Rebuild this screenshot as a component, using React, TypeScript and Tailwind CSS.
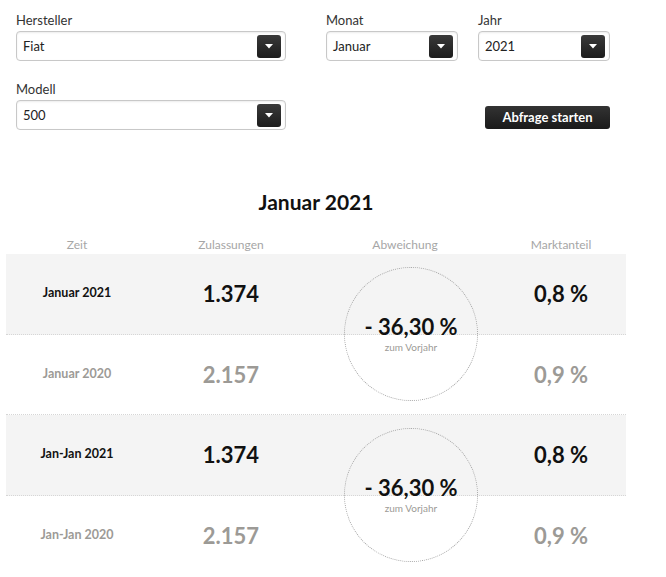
import React from "react";

const font = { fontFamily: "Lato, 'Noto Sans', sans-serif" };

const Select = ({ value, className }: { value: string; className: string }) => {
  return (
    <div
      className={`flex h-[30px] items-center justify-between rounded-[4px] border border-[#c8c8c8] bg-white pl-[6px] pr-[4px] shadow-[inset_0_1px_2px_rgba(0,0,0,0.08)] ${className}`}
    >
      <span className="pt-[1px] text-[13px] text-[#222]">{value}</span>
      <span className="flex h-[23px] w-[24px] items-center justify-center rounded-[3px] bg-gradient-to-b from-[#3a3a3a] to-[#1c1c1c]">
        <svg width="8" height="5" viewBox="0 0 8 5">
          <path d="M0 0 L8 0 L4 4.5 Z" fill="#fff" />
        </svg>
      </span>
    </div>
  );
};

const Field = ({
  label,
  value,
  className,
}: {
  label: string;
  value: string;
  className: string;
}) => (
  <div className="flex flex-col">
    <label className="mb-[3px] text-[13px] leading-[16px] text-[#333]">{label}</label>
    <Select value={value} className={className} />
  </div>
);

interface IRow {
  zeit: string;
  zulassungen: string;
  markt: string;
  current: boolean;
}

const Row = ({ row, last }: { row: IRow; last: boolean }) => (
  <div
    className={`grid h-[80.5px] grid-cols-[142px_166px_182px_130px] items-center ${
      last ? "" : "border-b border-dotted border-[#d6d6d6]"
    } ${row.current ? "bg-[#f4f4f4] text-[#111]" : "bg-white text-[#9c9a96]"}`}
  >
    <p className="text-center text-[12.5px] font-bold">{row.zeit}</p>
    <p className="text-center text-[22px] font-bold">{row.zulassungen}</p>
    <div />
    <p className="text-center text-[22px] font-bold">{row.markt}</p>
  </div>
);

const Pair = ({ rows, diff, last }: { rows: IRow[]; diff: string; last: boolean }) => (
  <div className="relative">
    {rows.map((r, i) => (
      <Row key={r.zeit} row={r} last={last && i === rows.length - 1} />
    ))}
    <div className="absolute left-[338px] top-[13px] flex h-[134px] w-[134px] flex-col items-center justify-center rounded-full border border-dotted border-[#a8a8a8]">
      <p className="text-[22px] font-bold leading-[26px] text-[#111]">{diff}</p>
      <p className="text-[10px] leading-[14px] text-[#9c9a96]">zum Vorjahr</p>
    </div>
  </div>
);

export default function App() {
  const monat: IRow[] = [
    { zeit: "Januar 2021", zulassungen: "1.374", markt: "0,8 %", current: true },
    { zeit: "Januar 2020", zulassungen: "2.157", markt: "0,9 %", current: false },
  ];
  const jahr: IRow[] = [
    { zeit: "Jan-Jan 2021", zulassungen: "1.374", markt: "0,8 %", current: true },
    { zeit: "Jan-Jan 2020", zulassungen: "2.157", markt: "0,9 %", current: false },
  ];

  return (
    <div className="min-h-[577px] w-[666px] bg-white" style={font}>
      <div className="pl-[16px] pt-[12px]">
        <div className="flex">
          <Field label="Hersteller" value="Fiat" className="w-[270px]" />
          <div className="ml-[40px]">
            <Field label="Monat" value="Januar" className="w-[132px]" />
          </div>
          <div className="ml-[20px]">
            <Field label="Jahr" value="2021" className="w-[132px]" />
          </div>
        </div>
        <div className="mt-[20px] flex w-[594px] items-end justify-between">
          <Field label="Modell" value="500" className="w-[270px]" />
          <button className="mb-[1px] h-[23px] w-[125px] rounded-[3px] bg-gradient-to-b from-[#333] to-[#1a1a1a] text-[13px] font-bold text-white">
            Abfrage starten
          </button>
        </div>
      </div>

      <div className="ml-[6px] mt-[58px] w-[620px]">
        <h2 className="text-center text-[21px] font-bold leading-[28px] text-[#111]">
          Januar 2021
        </h2>
        <div className="mt-[20px] grid h-[18px] grid-cols-[142px_166px_182px_130px] items-center text-center text-[12px] text-[#a6a6a6]">
          <span>Zeit</span>
          <span>Zulassungen</span>
          <span>Abweichung</span>
          <span>Marktanteil</span>
        </div>
        <Pair rows={monat} diff="- 36,30 %" last={false} />
        <Pair rows={jahr} diff="- 36,30 %" last={true} />
      </div>
    </div>
  );
}
